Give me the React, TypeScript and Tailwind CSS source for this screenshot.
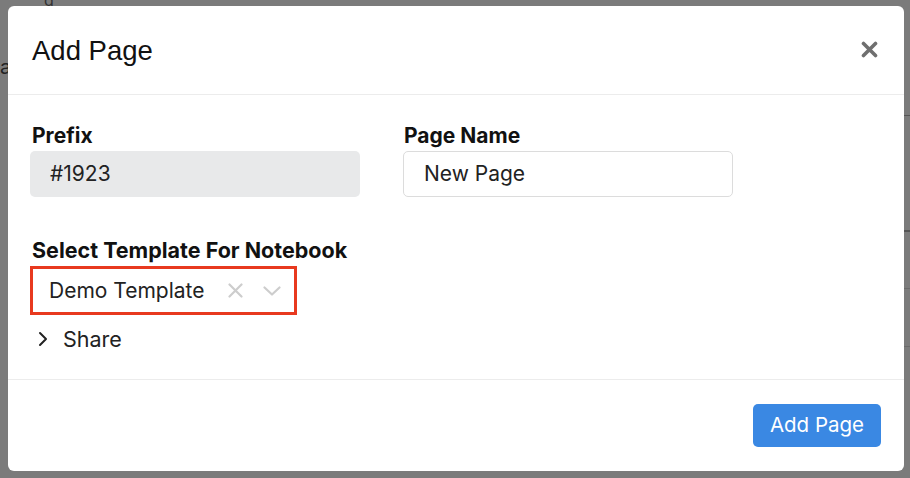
import { ChevronRight } from "lucide-react"

export default function App() {
  return (
    <div className="relative h-[478px] w-[910px] overflow-hidden bg-[#7b7b7b]" style={{ fontFamily: "Inter, 'Noto Sans', sans-serif" }}>
      {/* faint page behind the backdrop */}
      <div className="absolute left-0 top-[52px] text-[20px] text-[#222]">a</div>
      <div className="absolute left-[44px] top-[-12px] text-[16px] text-[#333]">g</div>
      <div className="absolute right-0 top-[115px] h-px w-[8px] bg-[#555]" />
      <div className="absolute right-0 top-[230px] h-[2px] w-[8px] bg-[#555]" />
      <div className="absolute right-0 top-[288px] h-px w-[8px] bg-[#6a6a6a]" />
      <div className="absolute right-0 top-[346px] h-px w-[8px] bg-[#6a6a6a]" />

      {/* modal */}
      <div className="absolute left-[8px] top-[6px] flex h-[465px] w-[896px] flex-col rounded-[6px] bg-white">
        <div className="flex h-[89px] items-center justify-between border-b border-[#ececec] pl-[24px] pr-[26px]">
          <h2 className="pt-[1px] text-[27.5px] text-[#111]" style={{ fontFamily: "'Liberation Sans', Arial, sans-serif" }}>
            Add Page
          </h2>
          <svg width="17" height="17" viewBox="0 0 17 17" className="mb-[1px]">
            <path d="M2.5 2.5 L14.5 14.5 M14.5 2.5 L2.5 14.5" stroke="#6f6f6f" strokeWidth="3.6" strokeLinecap="round" />
          </svg>
        </div>

        <div className="flex flex-1 flex-col pl-[22px] pt-[28px]">
          <div className="flex gap-[43px]">
            <div className="flex w-[330px] flex-col gap-[2px]">
              <label className="pl-[2px] text-[21px] font-bold leading-[26px] text-[#111]">Prefix</label>
              <div className="flex h-[46px] items-center rounded-[5px] bg-[#e8e9ea] pl-[20px] text-[21px] text-[#222]">#1923</div>
            </div>
            <div className="flex w-[330px] flex-col gap-[2px]">
              <label className="pl-[1px] text-[21px] font-bold leading-[26px] text-[#111]">Page Name</label>
              <div className="flex h-[46px] items-center rounded-[5px] border border-[#dcdcdc] bg-white pl-[20px] text-[21px] text-[#222]">New Page</div>
            </div>
          </div>

          <label className="mt-[40px] pl-[2px] text-[21.5px] font-bold leading-[26px] text-[#111]">Select Template For Notebook</label>
          <div className="mt-[3px] flex h-[49px] w-[267px] items-center border-[3px] border-[#e8391f] pl-[16px] pr-[13px]">
            <span className="flex-1 text-[21px] text-[#222]">Demo Template</span>
            <svg width="15" height="15" viewBox="0 0 15 15">
              <path d="M1.5 1.5 L13.5 13.5 M13.5 1.5 L1.5 13.5" stroke="#cdcdcd" strokeWidth="2.2" strokeLinecap="round" />
            </svg>
            <svg width="18" height="10" viewBox="0 0 18 10" className="ml-[20px]">
              <path d="M1.5 1.5 L9 8.5 L16.5 1.5" fill="none" stroke="#cdcdcd" strokeWidth="2.2" strokeLinecap="round" strokeLinejoin="round" />
            </svg>
          </div>

          <div className="mt-[11px] flex items-center gap-[8px] pl-[1px] text-[21.5px] leading-[26px] text-[#222]">
            <ChevronRight size={24} strokeWidth={2} className="text-[#222]" />
            <span>Share</span>
          </div>
        </div>

        <div className="flex h-[92px] justify-end border-t border-[#ececec] pr-[23px] pt-[24px]">
          <button className="h-[43px] w-[128px] rounded-[5px] bg-[#3a88e3] text-[20.5px] text-white">Add Page</button>
        </div>
      </div>
    </div>
  )
}
